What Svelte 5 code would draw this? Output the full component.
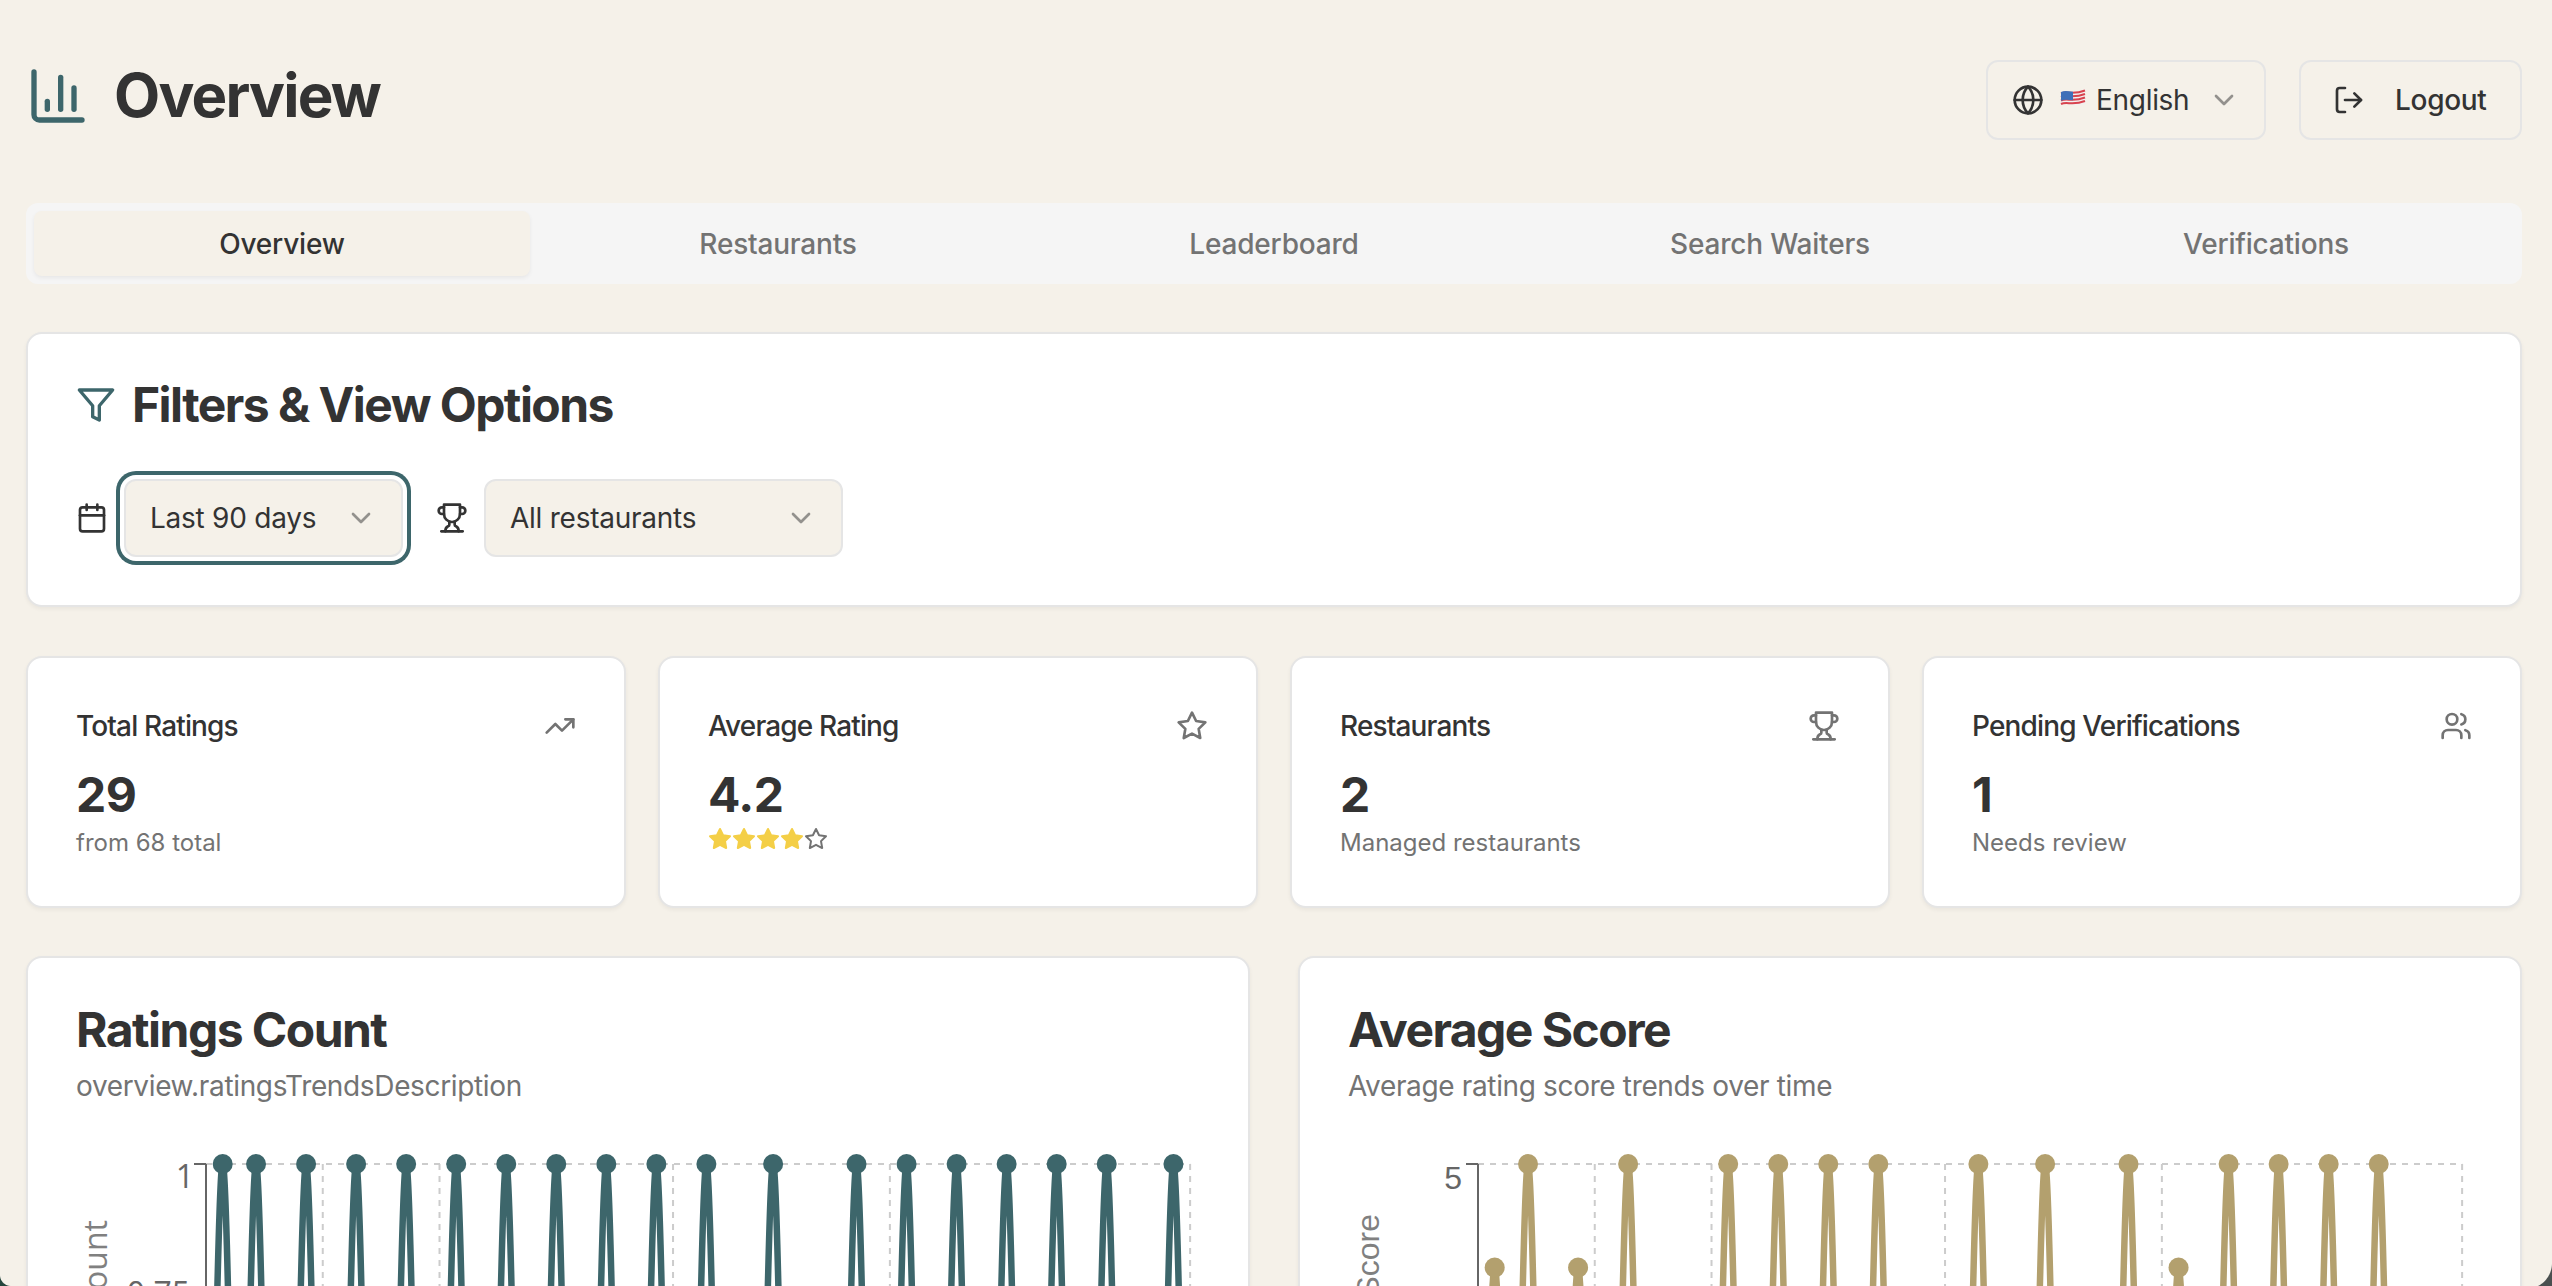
<script>
    const tabs = ["Overview", "Restaurants", "Leaderboard", "Search Waiters", "Verifications"];

    const icons = {
        chart: '<path d="M3 3v16a2 2 0 0 0 2 2h16"/><path d="M18 17V9"/><path d="M13 17V5"/><path d="M8 17v-3"/>',
        filter: '<polygon points="22 3 2 3 10 12.46 10 19 14 21 14 12.46 22 3"/>',
        calendar: '<path d="M8 2v4"/><path d="M16 2v4"/><rect width="18" height="18" x="3" y="4" rx="2"/><path d="M3 10h18"/>',
        trophy: '<path d="M6 9H4.5a2.5 2.5 0 0 1 0-5H6"/><path d="M18 9h1.5a2.5 2.5 0 0 0 0-5H18"/><path d="M4 22h16"/><path d="M10 14.66V17c0 .55-.47.98-.97 1.21C7.85 18.75 7 20.24 7 22"/><path d="M14 14.66V17c0 .55.47.98.97 1.21C16.15 18.75 17 20.24 17 22"/><path d="M18 2H6v7a6 6 0 0 0 12 0V2Z"/>',
        chevron: '<path d="m6 9 6 6 6-6"/>',
        globe: '<circle cx="12" cy="12" r="10"/><path d="M12 2a14.5 14.5 0 0 0 0 20 14.5 14.5 0 0 0 0-20"/><path d="M2 12h20"/>',
        logout: '<path d="M9 21H5a2 2 0 0 1-2-2V5a2 2 0 0 1 2-2h4"/><path d="m16 17 5-5-5-5"/><path d="M21 12H9"/>',
        trending: '<path d="m22 7-8.5 8.5-5-5L2 17"/><path d="M16 7h6v6"/>',
        star: '<polygon points="12 2 15.09 8.26 22 9.27 17 14.14 18.18 21.02 12 17.77 5.82 21.02 7 14.14 2 9.27 8.91 8.26 12 2"/>',
        users: '<path d="M16 21v-2a4 4 0 0 0-4-4H6a4 4 0 0 0-4 4v2"/><circle cx="9" cy="7" r="4"/><path d="M22 21v-2a4 4 0 0 0-3-3.87"/><path d="M16 3.13a4 4 0 0 1 0 7.75"/>',
    };

    const stats = [
        { label: "Total Ratings", value: "29", sub: "from 68 total", icon: "trending" },
        { label: "Average Rating", value: "4.2", stars: 4, icon: "star" },
        { label: "Restaurants", value: "2", sub: "Managed restaurants", icon: "trophy" },
        { label: "Pending Verifications", value: "1", sub: "Needs review", icon: "users" },
    ];

    // chart geometry, one point per day on a 60 day axis
    const axisX = 130;
    const top = 10;
    const plotH = 518;
    const step = 16.68;
    const gridDays = [7, 14, 28, 41, 59];

    function series(days, max) {
        const pts = [];
        for (let i = 0; i < 60; i++) {
            const v = days[i] || 0;
            pts.push({ x: axisX + i * step, y: top + plotH - (v / max) * plotH });
        }
        return pts;
    }

    // every point is a peak or a flat zero, so all the monotone tangents are level
    function curve(pts) {
        let d = `M${pts[0].x} ${pts[0].y}`;
        for (let i = 1; i < pts.length; i++) {
            const a = pts[i - 1];
            const b = pts[i];
            d += `C${a.x + step / 3} ${a.y} ${b.x - step / 3} ${b.y} ${b.x} ${b.y}`;
        }
        return d;
    }

    const one = {};
    [1, 3, 6, 9, 12, 15, 18, 21, 24, 27, 30, 34, 39, 42, 45, 48, 51, 54, 58].forEach((d) => (one[d] = 1));

    const score = {};
    [3, 9, 15, 18, 21, 24, 30, 34, 39, 45, 48, 51, 54].forEach((d) => (score[d] = 5));
    [1, 6, 42].forEach((d) => (score[d] = 4));

    const charts = [
        {
            title: "Ratings Count",
            desc: "overview.ratingsTrendsDescription",
            color: "#3d666b",
            axisName: "Count",
            font: "axis-open",
            ticks: [{ label: "1", y: 10, x: 118, base: 34 }, { label: "0.75", y: 139.5, x: 114, base: 151 }],
            nameY: 66,
            points: series(one, 1),
        },
        {
            title: "Average Score",
            desc: "Average rating score trends over time",
            color: "#b3a06e",
            axisName: "Score",
            font: "axis-lib",
            ticks: [{ label: "5", y: 10, x: 114, base: 35 }],
            nameY: 60,
            points: series(score, 5),
        },
    ];
</script>

{#snippet icon(name, size)}
    <svg class="icon" width={size} height={size} viewBox="0 0 24 24" fill="none" stroke="currentColor" stroke-width="2" stroke-linecap="round" stroke-linejoin="round">
        {@html icons[name]}
    </svg>
{/snippet}

<div class="page">
    <header class="top">
        <div class="brand">
            <span class="teal">{@render icon("chart", 64)}</span>
            <h1>Overview</h1>
        </div>
        <div class="actions">
            <button class="btn lang">
                {@render icon("globe", 32)}
                <span class="lang-text">
                    <svg class="flag" width="26" height="20" viewBox="0 0 26 20">
                        <path d="M1 4c6-3 11 2 24-3v15c-12 4-18-2-24 1z" fill="#f2f0f0" />
                        <path d="M1 5.500c6-3 11 2 24-3M1 9c6-3 11 2 24-3M1 12.500c6-3 11 2 24-3M1 16c6-3 11 2 24-3" stroke="#d8434e" stroke-width="2" fill="none" />
                        <path d="M1 4c4-2 8-.5 12-.2v8.500c-4 0-8-1.300-12 .5z" fill="#3f6fb8" />
                    </svg>
                    English
                </span>
                <span class="chev">{@render icon("chevron", 32)}</span>
            </button>
            <button class="btn logout">
                {@render icon("logout", 32)}
                <span>Logout</span>
            </button>
        </div>
    </header>

    <nav class="tabs">
        {#each tabs as tab, i}
            <div class="tab" class:active={i === 0}>{tab}</div>
        {/each}
    </nav>

    <section class="card filters">
        <h2><span class="teal">{@render icon("filter", 40)}</span>Filters &amp; View Options</h2>
        <div class="filter-row">
            {@render icon("calendar", 32)}
            <div class="select focused">
                <span>Last 90 days</span>
                <span class="chev">{@render icon("chevron", 32)}</span>
            </div>
            <span class="trophy">{@render icon("trophy", 32)}</span>
            <div class="select wide">
                <span>All restaurants</span>
                <span class="chev">{@render icon("chevron", 32)}</span>
            </div>
        </div>
    </section>

    <div class="stats">
        {#each stats as s}
            <section class="card stat">
                <div class="stat-head">
                    <span>{s.label}</span>
                    <span class="muted">{@render icon(s.icon, 32)}</span>
                </div>
                <div class="value">{s.value}</div>
                {#if s.stars}
                    <div class="stars">
                        {#each [1, 2, 3, 4, 5] as n}
                            <svg width="24" height="24" viewBox="0 0 24 24" class:on={n <= s.stars} class="mini">
                                <polygon points="12 2 15.09 8.26 22 9.27 17 14.14 18.18 21.02 12 17.77 5.82 21.02 7 14.14 2 9.27 8.91 8.26 12 2" />
                            </svg>
                        {/each}
                    </div>
                {:else}
                    <div class="sub">{s.sub}</div>
                {/if}
            </section>
        {/each}
    </div>

    <div class="charts">
        {#each charts as c}
            <section class="card chart">
                <h2>{c.title}</h2>
                <p>{c.desc}</p>
                <svg class="plot" width="1122" height="560">
                    <path d="M{axisX} {top}H{axisX + 59 * step}" class="grid" />
                    {#each gridDays as d}
                        <path d="M{axisX + d * step} {top}V{top + plotH}" class="grid" />
                    {/each}
                    <path d="M{axisX} {top}V{top + plotH}" class="axis" />
                    {#each c.ticks as t}
                        <path d="M{axisX - 12} {t.y}H{axisX}" class="axis" />
                        <text x={t.x} y={t.base} text-anchor="end" class={"tick " + c.font}>{t.label}</text>
                    {/each}
                    <text transform="translate(31 {c.nameY}) rotate(-90)" text-anchor="end" class={"name " + c.font}>{c.axisName}</text>
                    <path d={curve(c.points)} fill="none" stroke={c.color} stroke-width="6.5" />
                    {#each c.points as p}
                        <circle cx={p.x} cy={p.y} r="10" fill={c.color} />
                    {/each}
                </svg>
            </section>
        {/each}
    </div>
</div>

<div class="corner left"></div>
<div class="corner right"></div>

<style>
    :global(body) {
        margin: 0;
        height: 100vh;
        overflow: hidden;
        background: #f5f1e9;
        color: #333;
        font-family: Inter, "Noto Sans", sans-serif;
    }

    .page {
        padding: 60px 30px 0 26px;
    }

    .icon {
        display: block;
        flex: none;
    }

    .teal {
        color: #3d666b;
        display: block;
    }

    .muted {
        color: #737373;
    }

    .top {
        display: flex;
        justify-content: space-between;
        align-items: center;
        height: 80px;
        margin-bottom: 63px;
    }

    .brand {
        display: flex;
        align-items: center;
        gap: 24px;
        padding-bottom: 8px;
    }

    h1 {
        margin: 0 0 2px;
        font-size: 60px;
        line-height: 72px;
        font-weight: 700;
        letter-spacing: -1.8px;
    }

    .actions {
        display: flex;
        gap: 33px;
    }

    .btn {
        display: flex;
        align-items: center;
        box-sizing: border-box;
        height: 80px;
        background: #f5f1e9;
        border: 2px solid #e5e5e5;
        border-radius: 12px;
        font: 500 28px Inter, sans-serif;
        letter-spacing: -0.3px;
        color: #333;
        padding: 0;
    }

    .lang {
        width: 280px;
        padding: 0 24px;
        gap: 16px;
    }

    .lang-text {
        display: flex;
        align-items: center;
        gap: 10px;
        flex: 1;
        font-weight: 400;
    }

    .flag {
        display: block;
        margin-top: -4px;
    }

    .logout {
        width: 223px;
        padding: 0 32px;
        gap: 30px;
    }

    .chev {
        color: #333;
        opacity: 0.5;
    }

    .tabs {
        display: grid;
        grid-template-columns: repeat(5, 1fr);
        box-sizing: border-box;
        height: 81px;
        padding: 8px;
        background: #f5f5f5;
        border-radius: 12px;
        margin-bottom: 48px;
    }

    .tab {
        display: flex;
        align-items: center;
        justify-content: center;
        border-radius: 8px;
        font-size: 28px;
        font-weight: 500;
        letter-spacing: -0.2px;
        color: #737373;
    }

    .tab.active {
        background: #f5f1e9;
        color: #333;
        box-shadow: 0 2px 4px rgba(0, 0, 0, 0.06);
    }

    .card {
        background: #fff;
        border: 2px solid #e5e5e5;
        border-radius: 16px;
        box-shadow: 0 2px 4px rgba(0, 0, 0, 0.05);
        box-sizing: border-box;
    }

    h2 {
        margin: 0;
        font-size: 48px;
        line-height: 48px;
        font-weight: 700;
        letter-spacing: -1.55px;
    }

    .filters {
        padding: 48px;
        margin-bottom: 49px;
    }

    .filters h2 {
        display: flex;
        align-items: center;
        gap: 16px;
        margin: -1px 0 50px;
    }

    .filter-row {
        display: flex;
        align-items: center;
        gap: 16px;
    }

    .select {
        display: flex;
        align-items: center;
        justify-content: space-between;
        box-sizing: border-box;
        width: 279px;
        height: 78px;
        padding: 0 24px;
        background: #f5f1e9;
        border: 2px solid #e5e5e5;
        border-radius: 12px;
        font-size: 28px;
        letter-spacing: -0.25px;
    }

    .select.wide {
        width: 359px;
    }

    .select.focused {
        box-shadow: 0 0 0 4px #fff, 0 0 0 8px #3d666b;
    }

    .trophy {
        margin-left: 17px;
    }

    .stats {
        display: grid;
        grid-template-columns: repeat(4, 1fr);
        gap: 32px;
        margin-bottom: 48px;
    }

    .stat {
        height: 252px;
        padding: 48px;
    }

    .stat-head {
        display: flex;
        justify-content: space-between;
        align-items: center;
        height: 40px;
        margin-bottom: 17px;
        font-size: 28px;
        font-weight: 500;
        letter-spacing: -0.85px;
    }

    .value {
        font-size: 48px;
        line-height: 64px;
        font-weight: 700;
        letter-spacing: -0.6px;
    }

    .sub {
        font-size: 24px;
        line-height: 32px;
        color: #737373;
    }

    .stars {
        display: flex;
    }

    .mini {
        display: block;
        fill: none;
        stroke: #737373;
        stroke-width: 2;
        stroke-linejoin: round;
    }

    .mini.on {
        fill: #f4cf47;
        stroke: #f4cf47;
    }

    .charts {
        display: grid;
        grid-template-columns: repeat(2, 1fr);
        gap: 48px;
    }

    .chart {
        padding: 48px;
    }

    .chart p {
        margin: 12px 0 48px;
        font-size: 28px;
        line-height: 40px;
        letter-spacing: -0.35px;
        color: #737373;
    }

    .plot {
        display: block;
    }

    .grid {
        fill: none;
        stroke: #ccc;
        stroke-width: 2;
        stroke-dasharray: 6 6;
    }

    .axis {
        fill: none;
        stroke: #666;
        stroke-width: 2;
    }

    .tick {
        fill: #666;
        font-size: 32px;
    }

    .name {
        fill: #808080;
        font-size: 32px;
    }

    .axis-open {
        font-family: "Open Sans", sans-serif;
    }

    .axis-lib {
        font-family: "Liberation Sans", sans-serif;
    }

    .corner {
        position: fixed;
        bottom: 0;
    }

    .corner.left {
        left: 0;
        width: 11px;
        height: 11px;
        background: radial-gradient(circle at 100% 0, transparent 10.5px, #24453c 11.5px);
    }

    .corner.right {
        right: 0;
        width: 26px;
        height: 23px;
        background: radial-gradient(circle at 0 0, transparent 25.5px, #4a5050 26.5px);
    }
</style>
